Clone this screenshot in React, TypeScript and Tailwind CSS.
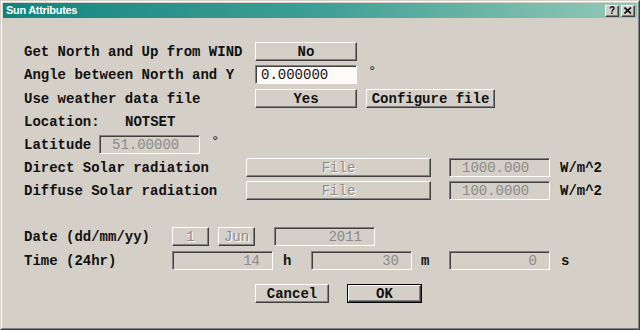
import React from "react";

const mono = "font-['Liberation_Mono',monospace] text-[14px] leading-none";
const raised =
  "border border-t-white border-l-white border-b-[#404040] border-r-[#404040] shadow-[inset_-1px_-1px_0_#808080] bg-[#d4d0c8]";
const sunken =
  "border border-t-[#808080] border-l-[#808080] border-b-white border-r-white shadow-[inset_1px_1px_0_#404040]";
const dis = "text-[#8a8a8a] [text-shadow:1px_1px_0_#ffffff]";

function Btn({ w, children, disabled, cls = "" }: { w: string; children: React.ReactNode; disabled?: boolean; cls?: string }) {
  return (
    <div className={`${raised} ${w} h-[19px] flex items-center justify-center ${disabled ? dis + " font-normal" : "font-bold text-[#111]"} ${cls}`}>
      {children}
    </div>
  );
}

function Box({ w, children, align = "left", white, cls = "" }: { w: string; children: React.ReactNode; align?: "left" | "right"; white?: boolean; cls?: string }) {
  return (
    <div
      className={`${sunken} ${w} h-[19px] flex items-center ${align === "right" ? "justify-end pr-[12px]" : white ? "pl-[5px]" : "pl-[12px]"} ${white ? "bg-[#fffafa] text-[#111]" : "text-[#8a8a8a]"} font-normal ${cls}`}
    >
      {children}
    </div>
  );
}

export default function App() {
  return (
    <div className="w-[640px] h-[330px] border border-t-[#d4d0c8] border-l-[#d4d0c8] border-b-[#404040] border-r-[#404040] bg-[#d4d0c8] overflow-hidden">
      <div className="w-full h-full border border-t-white border-l-white border-b-[#808080] border-r-[#808080] p-px flex flex-col">
        <div className="h-[15px] flex items-center justify-between bg-gradient-to-r from-[#0e8580] via-[#3d9f95] to-[#93c9b8] pl-[3px] pr-[2px]">
          <span className="font-['Liberation_Sans',sans-serif] font-bold text-[11px] text-white tracking-[-0.3px] leading-none">
            Sun Attributes
          </span>
          <div className="flex gap-[2px]">
            <div className={`${raised} w-[14px] h-[12px] flex items-center justify-center font-['Liberation_Sans',sans-serif] font-bold text-[10px] leading-none text-black`}>
              ?
            </div>
            <div className={`${raised} w-[14px] h-[12px] flex items-center justify-center`}>
              <svg width="8" height="7" viewBox="0 0 8 7">
                <path d="M0.5 0.5 L7 6.5 M7 0.5 L0.5 6.5" stroke="#000" strokeWidth="1.6" />
              </svg>
            </div>
          </div>
        </div>

        <div className={`${mono} pl-[21px] pt-[24px] flex flex-col font-bold text-[#111]`}>
          <div className="h-[19px] flex items-center">
            <span className="w-[231px]">Get North and Up from WIND</span>
            <Btn w="w-[102px]">No</Btn>
          </div>
          <div className="h-[19px] flex items-center mt-[4px]">
            <span className="w-[231px]">Angle between North and Y</span>
            <Box w="w-[102px]" white>0.000000</Box>
            <span className="ml-[11px] font-normal -mt-[6px]">°</span>
          </div>
          <div className="h-[19px] flex items-center mt-[5px]">
            <span className="w-[231px]">Use weather data file</span>
            <Btn w="w-[102px]">Yes</Btn>
            <Btn w="w-[129px]" cls="ml-[9px]">Configure file</Btn>
          </div>
          <div className="h-[19px] flex items-center mt-[4px]">
            <span className="w-[101px]">Location:</span>
            <span>NOTSET</span>
          </div>
          <div className="h-[19px] flex items-center mt-[4px]">
            <span className="w-[75px]">Latitude</span>
            <Box w="w-[101px]">51.00000</Box>
            <span className="ml-[11px] font-normal -mt-[6px]">°</span>
          </div>
          <div className="h-[19px] flex items-center mt-[4px]">
            <span className="w-[222px]">Direct Solar radiation</span>
            <Btn w="w-[185px]" disabled>File</Btn>
            <Box w="w-[101px]" cls="ml-[18px]">1000.000</Box>
            <span className="ml-[10px]">W/m^2</span>
          </div>
          <div className="h-[19px] flex items-center mt-[4px]">
            <span className="w-[222px]">Diffuse Solar radiation</span>
            <Btn w="w-[185px]" disabled>File</Btn>
            <Box w="w-[101px]" cls="ml-[18px]">100.0000</Box>
            <span className="ml-[10px]">W/m^2</span>
          </div>
          <div className="h-[19px] flex items-center mt-[27px]">
            <span className="w-[148px]">Date (dd/mm/yy)</span>
            <Btn w="w-[37px]" disabled>1</Btn>
            <Btn w="w-[37px]" disabled cls="ml-[9px]">Jun</Btn>
            <Box w="w-[101px]" align="right" cls="ml-[19px]">2011</Box>
          </div>
          <div className="h-[19px] flex items-center mt-[5px]">
            <span className="w-[148px]">Time (24hr)</span>
            <Box w="w-[101px]" align="right">14</Box>
            <span className="w-[38px] pl-[10px]">h</span>
            <Box w="w-[101px]" align="right">30</Box>
            <span className="w-[37px] pl-[9px]">m</span>
            <Box w="w-[101px]" align="right">0</Box>
            <span className="pl-[11px]">s</span>
          </div>
          <div className="h-[19px] flex items-center mt-[14px]">
            <Btn w="w-[74px]" cls="ml-[231px]">Cancel</Btn>
            <div className="ml-[18px] w-[75px] h-[19px] border border-black">
              <div className={`${raised} w-full h-full flex items-center justify-center font-bold text-[#111]`}>OK</div>
            </div>
          </div>
        </div>
      </div>
    </div>
  );
}
